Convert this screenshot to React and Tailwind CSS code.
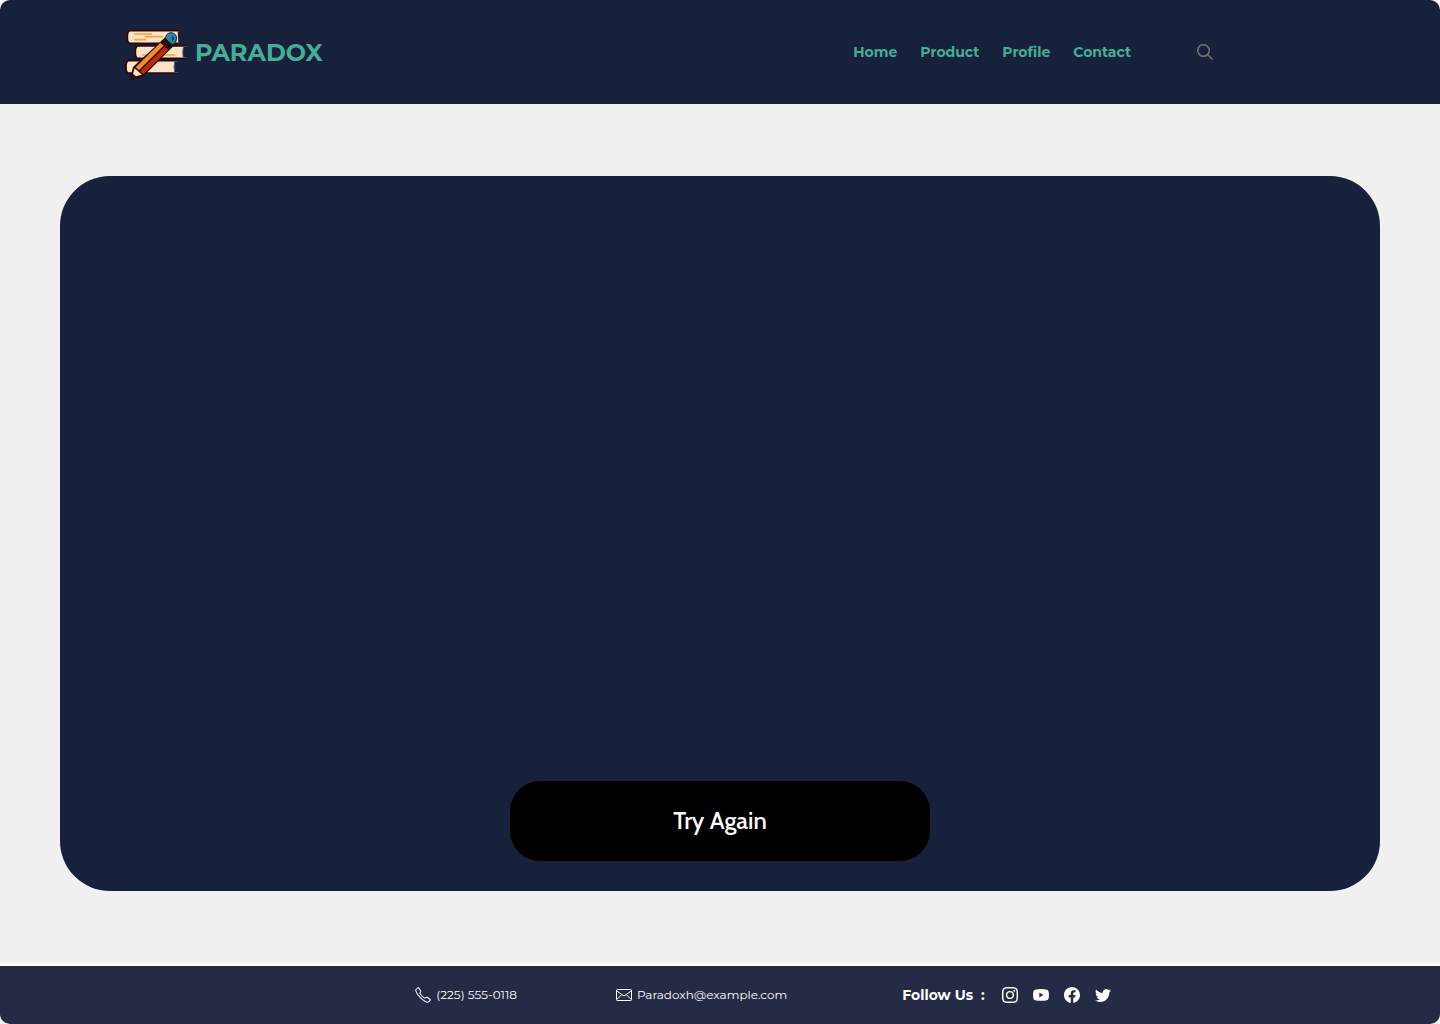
import React from "react";
import { BsFacebook, BsInstagram, BsTwitter } from "react-icons/bs";
import { SlPhone } from "react-icons/sl";

function BooksLogo() {
  return (
    <svg viewBox="18 24 186 156" className="h-[52px] w-[62px]" aria-hidden="true">
      <g fill="#fde4c8" stroke="#2b0808" strokeWidth="5" strokeLinejoin="round">
        <path d="M180 32H32Q25 34 25 51T32 70H180" />
        <path d="M203 78H56Q49 80 49 97T56 115H203" />
        <path d="M176 122H28Q21 124 21 141T28 159H176" />
      </g>
      <g fill="#18213b">
        <path d="M176 34.500h7v33h-5z" />
        <path d="M193 80.500h12v32h-12q-3-15 0-32z" />
        <path d="M167 124.500h12v32h-12q-3-15 0-32z" />
      </g>
      <g stroke="#4d6078" strokeWidth="3" fill="none">
        <path d="M193 82q-4 15 0 30M167 126q-4 15 0 30" />
      </g>
      <g stroke="#f4a340" strokeWidth="5">
        <path d="M46 42H99M77 50H132M46 59H82M69 105H99M130 105H169" />
      </g>
      <path
        d="M140 53L163 76L71 168L34 180L44 142Z"
        fill="#2b0808"
        stroke="#2b0808"
        strokeWidth="4"
        strokeLinejoin="round"
      />
      <path d="M124 68L134 77L60 151L50 142Z" fill="#ef8d2f" />
      <path d="M137 80L148 90L73 163L63 154Z" fill="#bd2b08" />
      <path d="M47 145L69 164L51 169L42 161Z" fill="#fde4c8" />
      <path
        d="M139 56Q140 40 156 38Q173 40 173 56Q172 70 160 74Z"
        fill="#258aa5"
        stroke="#102335"
        strokeWidth="3"
      />
      <path d="M160 50q6 6-1 11" fill="none" stroke="#102335" strokeWidth="4" />
    </svg>
  );
}

function SearchIcon() {
  return (
    <svg
      viewBox="0 0 16 16"
      className="size-4"
      fill="none"
      stroke="currentColor"
      strokeWidth="1.500"
      strokeLinecap="round"
      aria-hidden="true"
    >
      <circle cx="6.500" cy="6.500" r="5.800" />
      <path d="M10.700 10.700L15.300 15.300" />
    </svg>
  );
}

function EnvelopeIcon() {
  return (
    <svg
      viewBox="0 0 16 16"
      className="size-4"
      fill="none"
      stroke="currentColor"
      strokeLinejoin="round"
      aria-hidden="true"
    >
      <rect x=".5" y="2.500" width="15" height="11" rx=".8" />
      <path d="M.8 4L8 9L15.200 4M.8 12.300L5.800 7.600M15.200 12.300L10.200 7.600" />
    </svg>
  );
}

function YoutubeIcon() {
  return (
    <svg viewBox="0 0 16 12" className="h-3 w-4" fill="currentColor" aria-hidden="true">
      <path
        fillRule="evenodd"
        d="M3 .5Q8-.3 13 .5q2.500.2 2.700 2.500.5 3 0 6-.2 2.300-2.700 2.500-5 .6-10 0Q.5 11.300.3 9q-.5-3 0-6Q.5.700 3 .5zM6.300 3.500v5L10.500 6z"
      />
    </svg>
  );
}

const navItems = ["Home", "Product", "Profile", "Contact"];

const socialLinks = [
  { label: "Instagram", icon: <BsInstagram className="size-4" /> },
  { label: "YouTube", icon: <YoutubeIcon /> },
  { label: "Facebook", icon: <BsFacebook className="size-4" /> },
  { label: "Twitter", icon: <BsTwitter className="size-4" /> },
];

export default function App() {
  return (
    <div className="flex min-h-screen flex-col bg-white font-['Montserrat','Inter',sans-serif]">
      <header className="flex h-[104px] items-center justify-between rounded-t-[10px] bg-[#18213b] pr-[227px] pl-[125px] text-[#46ad98]">
        <a href="#home" className="flex items-center gap-2">
          <span className="pt-1">
            <BooksLogo />
          </span>
          <span className="pt-0.5 text-2xl font-bold">PARADOX</span>
        </a>
        <div className="flex items-center gap-[66px]">
          <nav className="flex gap-[23px] text-sm leading-6 font-bold">
            {navItems.map((item) => (
              <a key={item} href={"#" + item.toLowerCase()}>
                {item}
              </a>
            ))}
          </nav>
          <button type="button" aria-label="Search" className="text-[#737373]">
            <SearchIcon />
          </button>
        </div>
      </header>

      <main className="flex grow bg-[#f0f0f0] px-[60px] py-[72px]">
        <section className="flex grow flex-col items-center justify-end rounded-[50px] bg-[#18213b] pb-[30px]">
          <button
            type="button"
            className="h-20 w-[420px] max-w-full rounded-[30px] bg-black font-['Cabin','Lato',sans-serif] text-2xl font-medium text-white"
          >
            Try Again
          </button>
        </section>
      </main>

      <footer className="mt-[3px] flex h-[58px] items-center justify-center rounded-b-[10px] bg-[#262b45] pl-[86px] text-xs text-white">
        <a href="tel:2255550118" className="mr-[99px] flex items-center gap-[5px]">
          <SlPhone className="size-4" />
          <span>(225) 555-0118</span>
        </a>
        <a href="mailto:Paradoxh@example.com" className="mr-[115px] flex items-center gap-[5px]">
          <EnvelopeIcon />
          <span>Paradoxh@example.com</span>
        </a>
        <div className="flex items-center gap-[17px]">
          <span className="text-sm font-bold whitespace-pre">Follow Us  :</span>
          <div className="flex items-center gap-[15px]">
            {socialLinks.map(({ label, icon }) => (
              <a key={label} href={"#" + label.toLowerCase()} aria-label={label}>
                {icon}
              </a>
            ))}
          </div>
        </div>
      </footer>
    </div>
  );
}
